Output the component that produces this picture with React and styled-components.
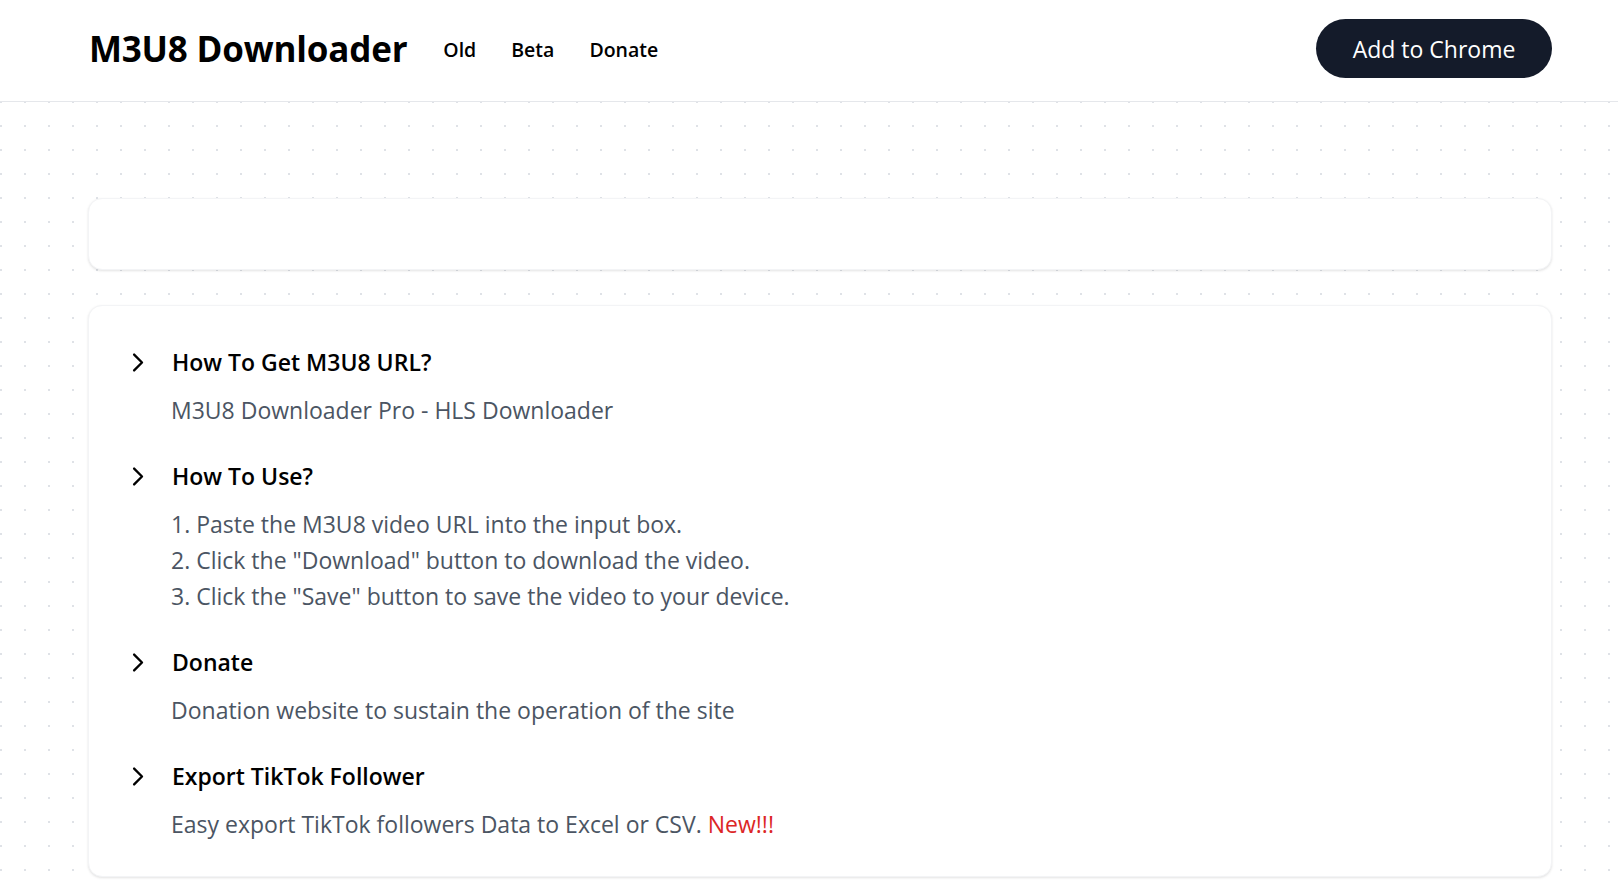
import React from 'react';
import styled, { createGlobalStyle } from 'styled-components';

const GlobalStyle = createGlobalStyle`
    * { box-sizing: border-box; }
    body {
        margin: 0;
        background: #fff;
        font-family: "Open Sans", "Noto Sans", sans-serif;
        color: #111827;
    }
`;

const faqs = [
    {
        title: 'How To Get M3U8 URL?',
        lines: ['M3U8 Downloader Pro - HLS Downloader'],
    },
    {
        title: 'How To Use?',
        lines: [
            '1. Paste the M3U8 video URL into the input box.',
            '2. Click the "Download" button to download the video.',
            '3. Click the "Save" button to save the video to your device.',
        ],
    },
    {
        title: 'Donate',
        lines: ['Donation website to sustain the operation of the site'],
    },
    {
        title: 'Export TikTok Follower',
        lines: ['Easy export TikTok followers Data to Excel or CSV.'],
        isNew: true,
    },
];

function Chevron() {
    return (
        <ChevronIcon viewBox="0 0 24 24" fill="none" stroke="currentColor" strokeWidth="2.1" strokeLinecap="round" strokeLinejoin="round">
            <path d="M9 5l7 7-7 7" />
        </ChevronIcon>
    );
}

function App() {
    return (
        <>
            <GlobalStyle />
            <Header>
                <LeftGroup>
                    <Logo>M3U8 Downloader</Logo>
                    <Nav>
                        <NavLink href="#">Old</NavLink>
                        <NavLink href="#">Beta</NavLink>
                        <NavLink href="#">Donate</NavLink>
                    </Nav>
                </LeftGroup>
                <ChromeButton href="#">Add to Chrome</ChromeButton>
            </Header>
            <Main>
                <InputCard />
                <FaqCard>
                    {faqs.map((item) => (
                        <FaqItem key={item.title}>
                            <FaqTitle>
                                <Chevron />
                                {item.title}
                            </FaqTitle>
                            <FaqBody>
                                {item.lines.map((line) => (
                                    <FaqLine key={line}>
                                        {line}
                                        {item.isNew && <NewTag> New!!!</NewTag>}
                                    </FaqLine>
                                ))}
                            </FaqBody>
                        </FaqItem>
                    ))}
                </FaqCard>
            </Main>
        </>
    );
}

const Header = styled.header`
    display: flex;
    align-items: center;
    justify-content: space-between;
    height: 102px;
    padding: 0 66px 4px 89px;
    border-bottom: 1px solid #e5e7eb;
    background: #fff;
`;

const LeftGroup = styled.div`
    display: flex;
    align-items: center;
    gap: 36px;
`;

const Logo = styled.div`
    font-size: 35px;
    font-weight: 700;
    color: #000;
    letter-spacing: -0.2px;
`;

const Nav = styled.nav`
    display: flex;
    align-items: center;
    gap: 35px;
    padding-top: 2px;
`;

const NavLink = styled.a`
    font-size: 19.5px;
    font-weight: 600;
    color: #000;
    text-decoration: none;
`;

const ChromeButton = styled.a`
    display: flex;
    align-items: center;
    justify-content: center;
    width: 236px;
    height: 59px;
    border-radius: 999px;
    background: #141b2a;
    color: #fff;
    font-size: 23px;
    text-decoration: none;
`;

const Main = styled.main`
    min-height: calc(100vh - 102px);
    padding: 96px 66px 40px 88px;
    background-color: #fff;
    background-image: radial-gradient(circle at 1px 1px, #dfe2e7 1px, transparent 1.2px);
    background-size: 24px 24px;
    background-position: 0 23px;
    display: flex;
    flex-direction: column;
    gap: 35px;
`;

const Card = styled.div`
    background: #fff;
    border-radius: 14px;
    border: 1px solid #f3f4f6;
    box-shadow: 0 1px 3px rgba(0, 0, 0, 0.08), 0 1px 2px rgba(0, 0, 0, 0.04);
`;

const InputCard = styled(Card)`
    height: 72px;
`;

const FaqCard = styled(Card)`
    display: flex;
    flex-direction: column;
    gap: 32px;
    padding: 40px 40px 34px 35px;
`;

const FaqItem = styled.div`
    display: flex;
    flex-direction: column;
    gap: 14px;
`;

const FaqTitle = styled.div`
    display: flex;
    align-items: center;
    gap: 21px;
    height: 32px;
    font-size: 23px;
    font-weight: 600;
    color: #000;
`;

const ChevronIcon = styled.svg`
    width: 27px;
    height: 27px;
    flex-shrink: 0;
`;

const FaqBody = styled.div`
    padding-left: 47px;
`;

const FaqLine = styled.p`
    margin: 0;
    font-size: 23px;
    line-height: 36px;
    color: #4b5563;
`;

const NewTag = styled.span`
    color: #dc2626;
`;

export default App;
